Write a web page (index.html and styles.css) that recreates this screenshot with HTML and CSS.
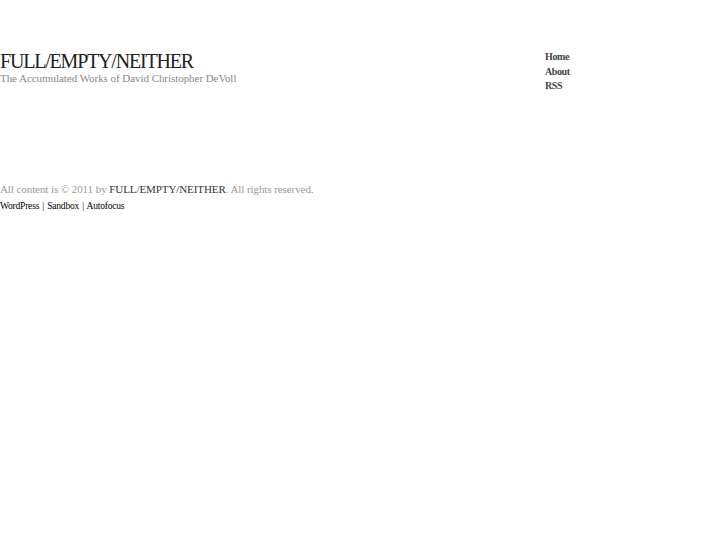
FILE: index.html
```html
<!DOCTYPE html>
<html>
<head>
<meta charset="utf-8">
<link rel="stylesheet" href="styles.css">
</head>
<body>
<div class="wrap">
  <header class="top">
    <div class="brand">
      <h1 class="title">FULL/EMPTY/NEITHER</h1>
      <div class="desc">The Accumulated Works of David Christopher DeVoll</div>
    </div>
    <nav class="menu">
      <a href="#">Home</a>
      <a href="#">About</a>
      <a href="#">RSS</a>
    </nav>
  </header>
  <footer class="foot">
    <p class="copy">All content is © 2011 by <a href="#">FULL/EMPTY/NEITHER</a>. All rights reserved.</p>
    <p class="credits"><a href="#">WordPress</a> | <a href="#">Sandbox</a> | <a href="#">Autofocus</a></p>
  </footer>
</div>
</body>
</html>
```
FILE: styles.css
```css
html, body { margin: 0; padding: 0; background: #fff; }
body { font-family: "Liberation Serif", "Times New Roman", serif; color: #333; }
a { text-decoration: none; color: inherit; }
.top { display: flex; padding-top: 50px; }
.brand { width: 545px; }
.title { margin: 0; font-size: 20px; font-weight: normal; letter-spacing: -1.2px; line-height: 22px; color: #222; }
.desc { font-size: 11px; color: #888; line-height: 12px; letter-spacing: -0.05px; }
.menu { display: flex; flex-direction: column; font-size: 10px; font-weight: bold; line-height: 14.5px; color: #444; letter-spacing: -0.4px; }
.foot { padding-top: 88px; }
.copy { margin: 0; font-size: 11px; color: #999; line-height: 14px; letter-spacing: -0.08px; }
.copy a { color: #333; }
.credits { margin: 0; font-size: 9.5px; color: #000; letter-spacing: -0.2px; line-height: 20px; word-spacing: 1px; }
```
